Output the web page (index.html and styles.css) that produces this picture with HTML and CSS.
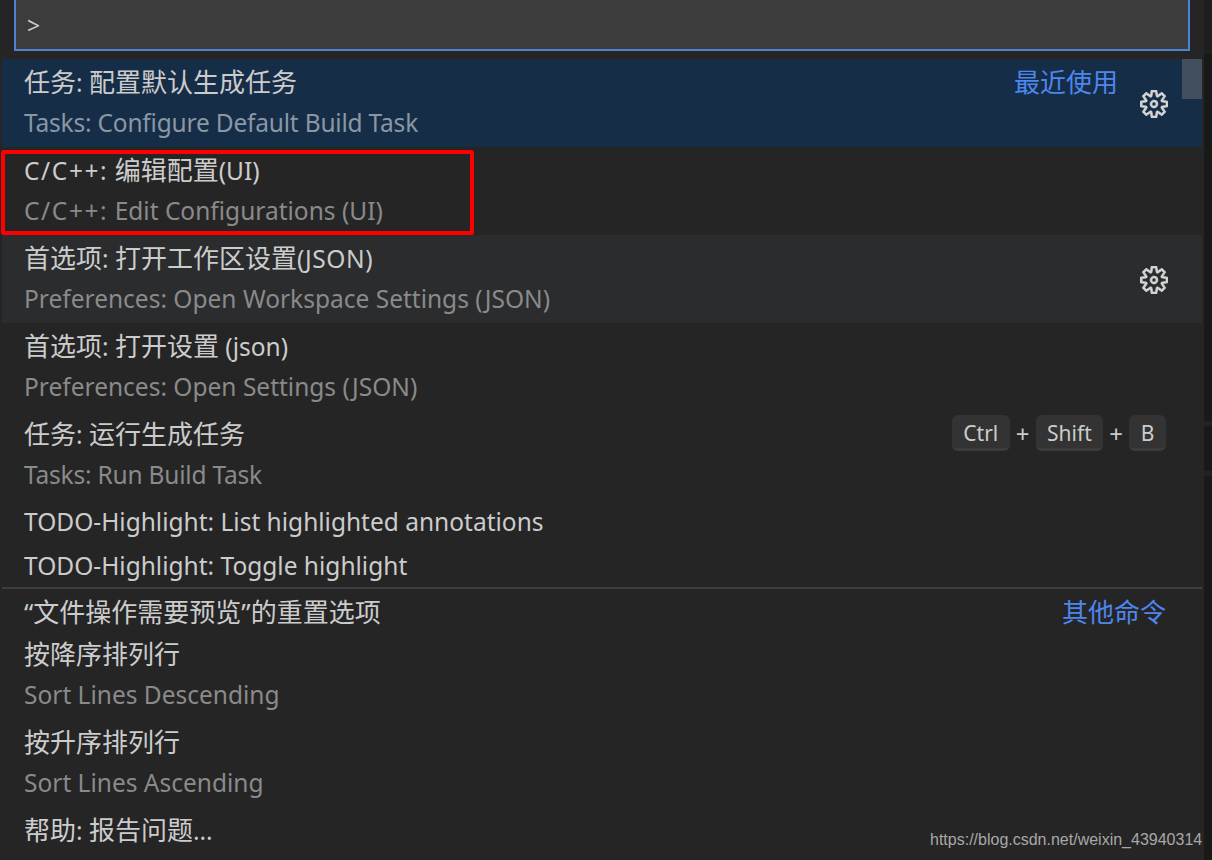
FILE: index.html
```html
<!DOCTYPE html>
<html lang="zh-CN">
<head>
  <meta charset="UTF-8" />
  <title>Command Palette</title>
  <link rel="stylesheet" href="styles.css">
</head>
<body>
  <div class="panel">
    <div class="input">&gt;</div>

    <div class="list">
      <div class="thumb"></div>

      <div class="row tall selected">
        <div class="main">
          <div class="label"><span class="zh">任务</span>: <span class="zh">配置默认生成任务</span></div>
          <div class="desc narrow">Tasks: Configure Default Build Task</div>
        </div>
        <div class="group group-recent">最近使用</div>
        <svg class="gear" viewBox="0 0 24 24"><path fill-rule="evenodd" d="M19.85 8.75l4.15.83v4.84l-4.15.83 2.35 3.52-3.42 3.42-3.52-2.35-.83 4.16H9.58l-.83-4.15-3.52 2.35-3.42-3.43 2.35-3.52L0 14.42V9.58l4.15-.84L1.8 5.22 5.22 1.8l3.53 2.35L9.58 0h4.84l.83 4.15 3.52-2.35 3.42 3.42-2.35 3.53zm-1.57 5.07l4-.81v-2l-4-.81-.54-1.3 2.29-3.43-1.43-1.43-3.43 2.29-1.3-.54-.81-4h-2l-.81 4-1.3.54-3.43-2.29-1.43 1.43L6.38 8.9l-.54 1.3-4 .81v2l4 .81.54 1.3-2.29 3.43 1.43 1.43 3.43-2.29 1.3.54.81 4h2l.81-4 1.3-.54 3.43 2.29 1.43-1.43-2.29-3.43.54-1.3zm-8.186-4.672A3.43 3.43 0 0 1 12 8.57 3.44 3.44 0 0 1 15.43 12a3.43 3.43 0 1 1-5.336-2.852zm.956 4.274c.281.188.612.288.95.288A1.7 1.7 0 0 0 13.71 12a1.71 1.71 0 1 0-2.66 1.422z"/></svg>
      </div>

      <div class="row tall">
        <div class="main">
          <div class="label"><span class="cpp">C/C++:</span> <span class="zh">编辑配置</span>(UI)</div>
          <div class="desc"><span class="cpp">C/C++:</span> Edit Configurations (UI)</div>
        </div>
      </div>

      <div class="row tall hover">
        <div class="main">
          <div class="label"><span class="zh">首选项</span>: <span class="zh">打开工作区设置</span><span class="caps">(JSON)</span></div>
          <div class="desc">Preferences: Open Workspace Settings (JSON)</div>
        </div>
        <svg class="gear" viewBox="0 0 24 24"><path fill-rule="evenodd" d="M19.85 8.75l4.15.83v4.84l-4.15.83 2.35 3.52-3.42 3.42-3.52-2.35-.83 4.16H9.58l-.83-4.15-3.52 2.35-3.42-3.43 2.35-3.52L0 14.42V9.58l4.15-.84L1.8 5.22 5.22 1.8l3.53 2.35L9.58 0h4.84l.83 4.15 3.52-2.35 3.42 3.42-2.35 3.53zm-1.57 5.07l4-.81v-2l-4-.81-.54-1.3 2.29-3.43-1.43-1.43-3.43 2.29-1.3-.54-.81-4h-2l-.81 4-1.3.54-3.43-2.29-1.43 1.43L6.38 8.9l-.54 1.3-4 .81v2l4 .81.54 1.3-2.29 3.43 1.43 1.43 3.43-2.29 1.3.54.81 4h2l.81-4 1.3-.54 3.43 2.29 1.43-1.43-2.29-3.43.54-1.3zm-8.186-4.672A3.43 3.43 0 0 1 12 8.57 3.44 3.44 0 0 1 15.43 12a3.43 3.43 0 1 1-5.336-2.852zm.956 4.274c.281.188.612.288.95.288A1.7 1.7 0 0 0 13.71 12a1.71 1.71 0 1 0-2.66 1.422z"/></svg>
      </div>

      <div class="row tall">
        <div class="main">
          <div class="label"><span class="zh">首选项</span>: <span class="zh">打开设置</span> (json)</div>
          <div class="desc">Preferences: Open Settings (JSON)</div>
        </div>
      </div>

      <div class="row tall">
        <div class="main">
          <div class="label"><span class="zh">任务</span>: <span class="zh">运行生成任务</span></div>
          <div class="desc narrow">Tasks: Run Build Task</div>
        </div>
        <div class="keys">
          <span class="key">Ctrl</span>
          <span class="plus">+</span>
          <span class="key">Shift</span>
          <span class="plus">+</span>
          <span class="key">B</span>
        </div>
      </div>

      <div class="row single">
        <div class="label">TODO-Highlight: List highlighted annotations</div>
      </div>
      <div class="row single">
        <div class="label">TODO-Highlight: Toggle highlight</div>
      </div>

      <div class="row separated">
        <div class="main">
          <div class="label"><span class="zh">“文件操作需要预览”的重置选项</span></div>
        </div>
        <div class="group group-other">其他命令</div>
      </div>

      <div class="row tall">
        <div class="main">
          <div class="label"><span class="zh">按降序排列行</span></div>
          <div class="desc">Sort Lines Descending</div>
        </div>
      </div>
      <div class="row tall">
        <div class="main">
          <div class="label"><span class="zh">按升序排列行</span></div>
          <div class="desc">Sort Lines Ascending</div>
        </div>
      </div>
      <div class="row single">
        <div class="label"><span class="zh">帮助</span>: <span class="zh">报告问题</span>...</div>
      </div>
    </div>
  </div>

  <div class="strip">
    <div class="strip-top"></div>
    <div class="tick tick-first"></div>
    <div class="tick tick-second"></div>
  </div>

  <div class="redbox"></div>
  <div class="watermark">https://blog.csdn.net/weixin_43940314</div>
</body>
</html>
```
FILE: styles.css
```css
html, body {
  margin: 0;
  padding: 0;
  height: 100%;
}

body {
  display: flex;
  height: 860px;
  overflow: hidden;
  position: relative;
  background: #252526;
  font-family: "Noto Sans", "Noto Sans CJK SC", sans-serif;
  font-size: 24.5px;
  color: #cccccc;
}

.panel {
  width: 1204px;
  flex: none;
}

.strip {
  flex: 1;
  background: #191919;
}

.strip-top {
  height: 54px;
  background: #1e1e1e;
}

.tick {
  height: 5px;
  background: #222222;
}

.tick-first {
  margin-top: 367px;
}

.tick-second {
  margin-top: 45px;
}

.input {
  box-sizing: border-box;
  height: 51px;
  margin: 0 14px 8px;
  padding: 6px 0 0 11px;
  background: #3c3c3c;
  border: 2px solid #4a83d4;
  border-top: none;
  font-size: 23px;
  line-height: 38px;
}

.list {
  position: relative;
  margin: 0 2px;
}

.thumb {
  position: absolute;
  top: 0;
  right: 0;
  width: 20px;
  height: 40px;
  background: #424f5f;
}

.row {
  box-sizing: border-box;
  display: flex;
  align-items: center;
  height: 44px;
  padding: 0 36px 0 22px;
}

.row.tall {
  height: 88px;
  padding-bottom: 2px;
}

.row.single {
  padding-top: 2px;
}

.row.selected {
  background: #162d47;
}

.row.hover {
  background: #2a2c2e;
}

.row.separated {
  border-top: 2px solid #3e3e42;
  padding-top: 4px;
}

.main {
  flex: 1;
  min-width: 0;
}

.label {
  line-height: 40px;
  white-space: nowrap;
}

.zh {
  font-size: 26px;
}

.cpp {
  letter-spacing: 1.6px;
}

.caps {
  letter-spacing: 0.6px;
}

.desc {
  line-height: 39px;
  color: #8a8a8a;
  white-space: nowrap;
}

.desc.narrow {
  letter-spacing: -0.2px;
}

.selected .desc {
  color: #8a97a5;
}

.group {
  color: #4e86ee;
  font-size: 26px;
  white-space: nowrap;
}

.group-recent {
  align-self: flex-start;
  margin-top: 3px;
  line-height: 40px;
  margin-right: 22px;
}

.group-other {
  margin-top: -2px;
}

.gear {
  width: 28px;
  height: 28px;
  margin: 4px -2px 0 0;
  fill: #d4d4d4;
  stroke: #d4d4d4;
  stroke-width: 0.5;
}

.keys {
  display: flex;
  align-self: flex-start;
  align-items: center;
  gap: 6px;
  margin-top: 4px;
}

.key {
  box-sizing: border-box;
  height: 36px;
  min-width: 37px;
  padding: 0 11.5px;
  background: #333333;
  border-bottom: 3px solid #3c3c3c;
  border-radius: 6px;
  font-size: 21px;
  line-height: 37px;
  text-align: center;
}

.plus {
  font-size: 24px;
}

.redbox {
  position: absolute;
  left: 1px;
  top: 150px;
  box-sizing: border-box;
  width: 473px;
  height: 85px;
  border: 4px solid #ff0000;
  border-radius: 3px;
}

.watermark {
  position: absolute;
  left: 930px;
  top: 830px;
  font-family: "Liberation Sans", sans-serif;
  font-size: 16px;
  line-height: 20px;
  color: #a8a8a8;
  white-space: nowrap;
}
```
